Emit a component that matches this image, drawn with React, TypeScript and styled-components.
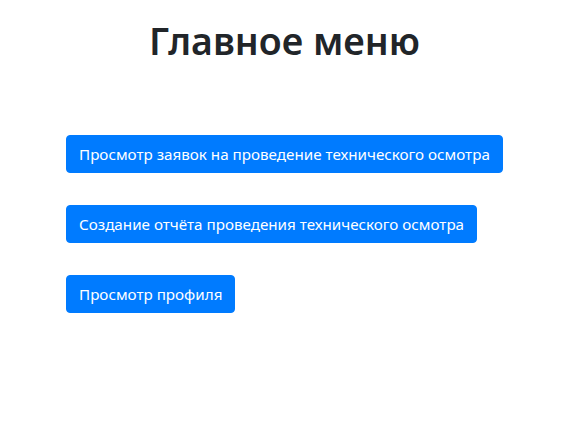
import React from 'react';
import styled, { createGlobalStyle } from 'styled-components';

const GlobalStyle = createGlobalStyle`
    body {
        margin: 0;
        background: #fff;
        font-family: "Noto Sans", "Open Sans", sans-serif;
        color: #212529;
    }
`;

const Page = styled.main`
    width: 569px;
    height: 435px;
    display: flex;
    flex-direction: column;
`;

const Title = styled.h1`
    margin: 17px 0 0;
    text-align: center;
    font-size: 37.5px;
    font-weight: 600;
    line-height: 48px;
`;

const Menu = styled.nav`
    display: flex;
    flex-direction: column;
    align-items: flex-start;
    gap: 32px;
    padding: 70px 0 0 66px;
`;

const MenuButton = styled.button`
    box-sizing: border-box;
    height: 38px;
    padding: 0 12px;
    border: 1px solid #007bff;
    border-radius: 4px;
    background: #007bff;
    color: #fff;
    font-family: inherit;
    font-size: 15.2px;
    line-height: 24px;
    cursor: pointer;
`;

const items = [
    'Просмотр заявок на проведение технического осмотра',
    'Создание отчёта проведения технического осмотра',
    'Просмотр профиля',
];

const App: React.FC = () => {
    return (
        <>
            <GlobalStyle />
            <Page>
                <Title>Главное меню</Title>
                <Menu>
                    {items.map((label) => (
                        <MenuButton key={label}>{label}</MenuButton>
                    ))}
                </Menu>
            </Page>
        </>
    );
};

export default App;
